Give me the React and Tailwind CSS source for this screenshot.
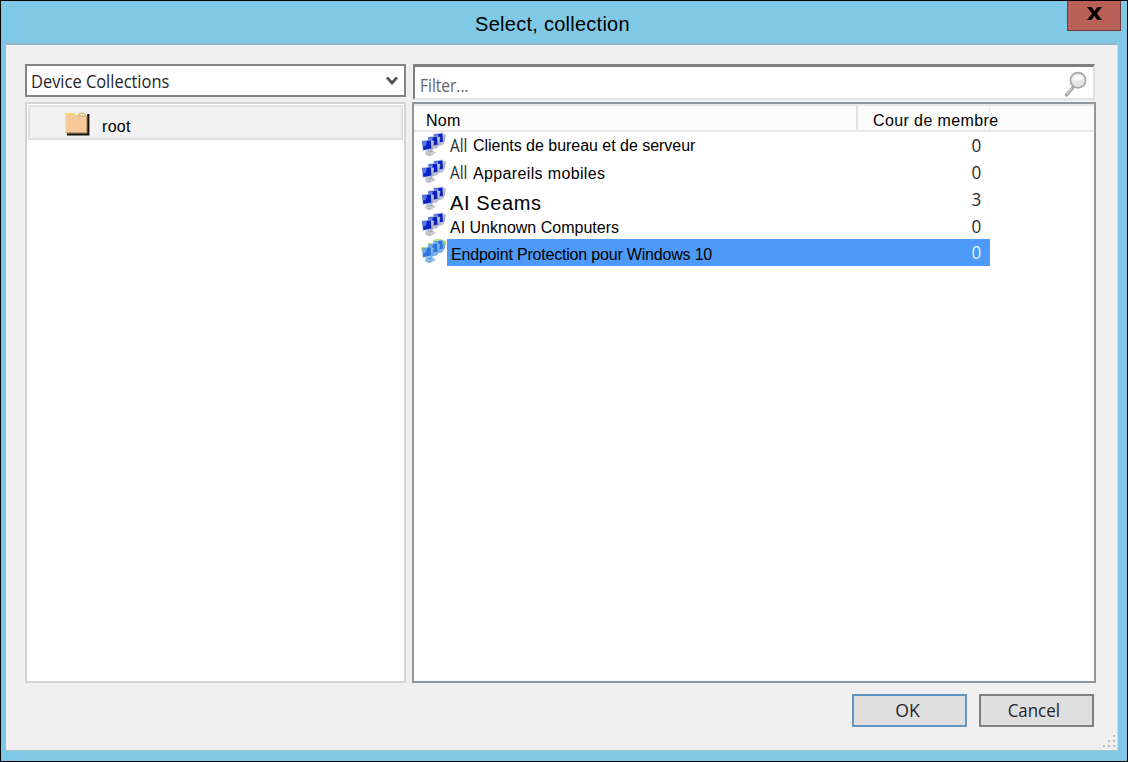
const arial = "font-['Liberation_Sans',Arial,sans-serif]";
const sans = "font-['Open_Sans','Noto_Sans',sans-serif]";

function DevicesIcon({ selected }) {
  const dark = selected ? '#2f74d8' : '#0a22c0';
  const light = selected ? '#69a5f0' : '#5578e8';
  const stand = selected ? '#7fb4ea' : '#c3c6d6';
  const shade = selected ? '#5795d8' : '#9a9cab';
  const edge = selected ? '#8fc0e4' : '#aab6e4';
  const shape = (x, y) => (
    <g transform={`translate(${x} ${y})`}>
      <path d="M9 1 L12.4 1.4 L11.6 8.6 L8.6 13 L4.2 14 L4 11 L8 10z" fill={stand} />
      <path d="M12 2 L11.2 8.6 L8.4 12.8" fill="none" stroke={shade} strokeWidth=".8" />
      <path d="M0 1.4 L9.8 0 L10.4 9.8 L1.2 11.4z" fill={edge} />
      <path d="M.8 2.1 L9.2 .9 L9.8 9.2 L1.8 10.7z" fill={dark} />
      <path d="M.8 2.1 L5.4 1.5 L4 6.6 L1.4 7.2z" fill={light} />
    </g>
  );
  return (
    <svg viewBox="0 0 25 25" className="h-[25px] w-[25px] shrink-0">
      <path d="M4 20.4 L11 18.4 L15 20.2 Q12 23.6 8 24 L4.6 22.6z" fill={selected ? '#8fbfe6' : '#c9c9ce'} />
      {shape(12.2, 0.6)}
      {shape(6.8, 3.6)}
      {shape(0.6, 7.4)}
      {selected && <path d="M1 12 V9 L3.5 8 M7 5.2 L9.5 4 M12.4 1.8 L15 .8 H20 M23.8 1.4 V5" fill="none" stroke="#a5dc38" strokeWidth="1.1" />}
      <path d="M7 20.2 L12 19 M6.4 22.8 L10 23" stroke={shade} strokeWidth=".8" />
    </svg>
  );
}

function FolderIcon() {
  return (
    <svg viewBox="0 0 25 24" className="h-6 w-[25px] shrink-0">
      <path d="M2 22.3 H23.3 V2" fill="none" stroke="#17120c" strokeWidth="2.2" />
      <path d="M.5 3 L1.8 1.6 H9 L10.5 3 H13 L14.5 1 H19.5 L21 3 H22 V21 H.5z" fill="#f6c99b" />
      <path d="M.5 3 L1.8 1.6 H9 L10.5 3" fill="none" stroke="#f3dd62" strokeWidth="1.2" />
      <path d="M.7 3 V21" stroke="#f5dfa0" strokeWidth="1" />
      <path d="M13 4 L14.5 1.2 H19.5 L20.8 4z" fill="#f4eec4" stroke="#b6a468" strokeWidth=".8" />
      <path d="M21.7 4 V20.7 H1" fill="none" stroke="#b48a5c" strokeWidth=".8" />
    </svg>
  );
}

function SearchIcon() {
  return (
    <svg viewBox="0 0 24 27" className="mt-[3px] h-[27px] w-6 shrink-0">
      <path d="M2.5 24 L8.6 17" stroke="#a3a3a3" strokeWidth="3.4" strokeLinecap="round" />
      <path d="M3 23 L8 17.2" stroke="#cfcfcf" strokeWidth="1.2" />
      <circle cx="14" cy="9.3" r="7.6" fill="#e6e6e6" stroke="#a9a9a9" strokeWidth="1.8" />
      <path d="M8.6 8.5 A5.5 5.5 0 0 1 19.2 7.5 Q14 11.5 8.6 8.5" fill="#f8f8f8" />
    </svg>
  );
}

const Prefix = () => (
  <span className={`${sans} inline-block w-[23px] text-[18px] leading-none`}>
    <span className="inline-block origin-left scale-x-[0.85] font-medium text-[#2b2b33]">All</span>
  </span>
);

const rows = [
  { prefix: true, name: 'Clients de bureau et de serveur', count: 0, style: 'text-base tracking-[-0.03px] pt-px' },
  { prefix: true, name: 'Appareils mobiles', count: 0, style: 'text-base tracking-[0.36px] pt-[3px]' },
  { name: 'AI Seams', count: 3, style: 'text-[20px] tracking-[0.6px] pt-[8px]' },
  { name: 'AI Unknown Computers', count: 0, style: 'text-base pt-[4px]' },
  { name: 'Endpoint Protection pour Windows 10', count: 0, style: 'text-base tracking-[-0.19px] pt-[6px]', selected: true },
];

function Row({ row }) {
  return (
    <div className="flex h-[26.75px] w-[569px] items-stretch">
      <div className="w-[26px] shrink-0">
        <DevicesIcon selected={row.selected} />
      </div>
      <div className={`flex flex-1 items-center justify-between pr-[9px] ${row.selected ? 'bg-[#4d9af8] pl-[4px]' : 'pl-[3px]'}`}>
        <div className="flex items-center">
          {row.prefix && <Prefix />}
          <span className={`${arial} ${row.style} leading-5 whitespace-nowrap text-black`}>{row.name}</span>
        </div>
        <span className={`${sans} inline-block origin-right scale-x-[0.95] text-[18px] leading-none font-medium ${row.selected ? 'text-[#e4f0ff]' : 'text-[#2b2b2b]'}`}>
          {row.count}
        </span>
      </div>
    </div>
  );
}

export default function App() {
  return (
    <div className="flex h-[762px] w-[1128px] flex-col border border-black bg-[#7fc9e7] pr-[9px] pb-[10px] pl-[5px]">
      <header className="flex h-[42px] shrink-0">
        <div className="w-[53px]" />
        <h1 className={`${arial} flex-1 pt-[10px] pr-[21px] text-center text-[20px] leading-[26px] tracking-[0.26px] text-black`}>
          Select, collection
        </h1>
        <button aria-label="Close" className="-mr-[3px] flex h-[30px] w-[54px] items-center justify-center border border-t-0 border-[#6d3b3a] bg-[#b85f56]">
          <svg viewBox="0 0 15 13" className="mb-[4px] h-[13px] w-[15px]">
            <path d="M0 0 H4.5 L7.5 4 L10.5 0 H15 L9.9 6.4 L15 13 H10.4 L7.4 8.9 L4.3 13 H0 L5.1 6.5z" fill="#000" />
          </svg>
        </button>
      </header>

      <main className="flex flex-1 flex-col border-t-2 border-r border-b border-t-[#96b6c5] border-r-[#c0dce8] border-b-[#a5c4d1] bg-[#f0f0f0] pt-[19px] pl-[19px]">
        <div className="flex gap-[6px]">
          <section className="flex w-[381px] flex-col gap-[5px]">
            <div className="flex h-[33px] items-center justify-between border-2 border-[#858585] bg-white pr-[6px] pl-[4px]">
              <span className={`${sans} w-[140px] origin-left scale-x-[0.913] text-[18px] leading-none font-medium whitespace-nowrap text-[#25252c]`}>
                Device Collections
              </span>
              <svg viewBox="0 0 12 10" className="h-[10px] w-3">
                <path d="M1 1.5 L6 7 L11 1.5" fill="none" stroke="#505050" strokeWidth="2.8" />
              </svg>
            </div>
            <div className="h-[581px] border-2 border-[#d4d4d4] bg-white p-px">
              <div className="flex h-[35px] items-center border-2 border-[#dfdfdf] bg-[#f2f2f2] pl-[35px]">
                <div className="pt-[3px]">
                  <FolderIcon />
                </div>
                <span className={`${arial} pt-[8px] pl-[12px] text-base leading-5 tracking-[0.3px] text-black`}>root</span>
              </div>
            </div>
          </section>

          <section className="flex w-[684px] flex-col gap-[2px]">
            <div className="mr-px ml-px flex h-9 items-center justify-between border-t-[3px] border-r-2 border-b-2 border-l-2 border-t-[#808080] border-r-[#e0e0e0] border-b-[#e3e3e3] border-l-[#808080] bg-white pr-[5px] pl-[5px]">
              <span className={`${sans} origin-left scale-x-[0.86] pt-[5px] text-[18px] leading-none font-medium text-[#626269]`}>Filter...</span>
              <SearchIcon />
            </div>
            <div className="h-[581px] border-2 border-[#90969d] bg-white">
              <div className={`${arial} flex h-7 items-stretch border-t-2 border-b-2 border-[#e9e9e9] bg-[#fcfcfc] text-base leading-[26px] text-black`}>
                <div className="w-[444px] border-r-2 border-[#e2e2e2] pt-[2px] pl-[12px] tracking-[0.3px]">Nom</div>
                <div className="w-[132px] border-r border-[#e9e9e9] pt-[2px] pl-[15px] tracking-[0.4px] whitespace-nowrap">Cour de membre</div>
              </div>
              <div className="pl-[7px]">
                {rows.map((row) => (
                  <Row key={row.name} row={row} />
                ))}
              </div>
            </div>
          </section>
        </div>

        <footer className={`${sans} flex justify-end gap-3 pt-[11px] pr-[23px] text-[18px] leading-none font-medium text-[#25252c]`}>
          <button className="flex h-[33px] w-[115px] items-center justify-center border-2 border-[#6295c4] bg-[#dfdfdf] pr-[4px] pb-[2px]">
            <span className="scale-x-[0.98]">OK</span>
          </button>
          <button className="flex h-[33px] w-[115px] items-center justify-center border-2 border-[#808080] bg-[#dfdfdf] pr-[5px] pb-[2px]">
            <span className="scale-x-[0.94]">Cancel</span>
          </button>
        </footer>
        <div className="flex flex-1 items-end justify-end pr-[1px] pb-[2px]">
          <svg viewBox="0 0 13 13" className="h-[13px] w-[13px]" fill="#bcbcbc">
            <path d="M10 0h2v2h-2z M5 5h2v2h-2z M10 5h2v2h-2z M0 10h2v2h-2z M5 10h2v2h-2z M10 10h2v2h-2z" />
          </svg>
        </div>
      </main>
    </div>
  );
}
